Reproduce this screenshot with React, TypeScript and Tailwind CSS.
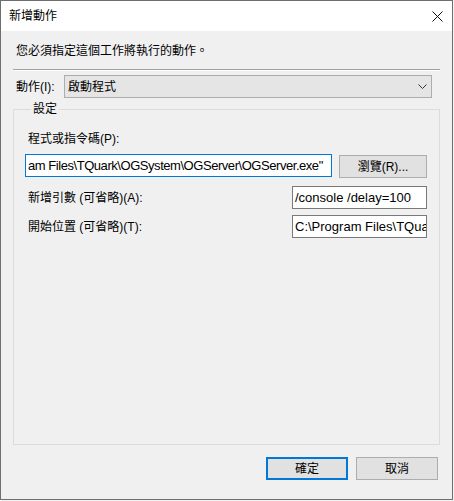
import React from 'react';

const font = "font-['Liberation_Sans','Noto_Sans_CJK_TC',sans-serif]";

// Plain Win32-style push button
const PushButton = ({ label, primary = false }: { label: string; primary?: boolean }) => (
  <div
    className={`w-[82px] h-[23px] flex items-center justify-center bg-[#e1e1e1] ${
      primary ? 'border-2 border-[#0078d7]' : 'border border-[#adadad]'
    }`}
  >
    {label}
  </div>
);

// Single line edit box
const EditBox = ({
  value,
  focused = false,
  className = '',
  textClass = '',
}: {
  value: string;
  focused?: boolean;
  className?: string;
  textClass?: string;
}) => (
  <div
    className={`h-[23px] flex items-center bg-white px-[2px] overflow-hidden whitespace-nowrap border ${
      focused ? 'border-[#0078d7]' : 'border-[#7a7a7a]'
    } ${className}`}
  >
    <span className={`text-[13px] leading-none ${textClass}`}>{value}</span>
  </div>
);

export default function App() {
  return (
    <div className={`w-[454px] h-[501px] bg-[#f4f4f4] text-[12px] leading-[16px] text-black ${font}`}>
      <div className="w-[453px] h-[500px] border border-[#6e6e6e] bg-[#f0f0f0] flex flex-col">
        {/* Title bar */}
        <div className="h-[30px] bg-white flex items-center justify-between pl-[8px] pr-[8px] shrink-0">
          <span className="text-[12px]">新增動作</span>
          <svg width="11" height="11" viewBox="0 0 11 11" className="mr-[1px]">
            <path d="M0.5 0.5 L10.5 10.5 M10.5 0.5 L0.5 10.5" stroke="#111" strokeWidth="1" fill="none" />
          </svg>
        </div>

        <div className="flex-1 flex flex-col px-[12px] pb-[19px]">
          <p className="mt-[12px] pl-[3px]">您必須指定這個工作將執行的動作。</p>

          {/* Etched separator */}
          <div className="mt-[10px] border-t border-[#a0a0a0] border-b border-b-white" />

          {/* Action combobox */}
          <div className="mt-[4px] flex items-center h-[23px]">
            <span className="w-[51px] pl-[3px] shrink-0">動作(I):</span>
            <div className="flex-1 mr-[8px] h-[23px] flex items-center justify-between bg-[#e5e5e5] border border-[#adadad] pl-[3px] pr-[4px]">
              <span>啟動程式</span>
              <svg width="9" height="5" viewBox="0 0 9 5">
                <path d="M0.5 0.5 L4.5 4.5 L8.5 0.5" stroke="#333" strokeWidth="1" fill="none" />
              </svg>
            </div>
          </div>

          {/* Settings group */}
          <fieldset className="mt-[3px] flex-1 border border-[#dcdcdc] px-[11px] pr-[12px]">
            <legend className="ml-[6px] px-[2px]">設定</legend>

            <p className="mt-[14px] pl-[3px]">程式或指令碼(P):</p>
            <div className="mt-[7px] flex items-start">
              <EditBox
                value={'am Files\\TQuark\\OGSystem\\OGServer\\OGServer.exe"'}
                focused
                className="w-[307px]"
                textClass="tracking-[-0.45px]"
              />
              <div className="ml-auto mt-[1px] w-[88px] h-[23px] flex items-center justify-center bg-[#e1e1e1] border border-[#adadad]">
                瀏覽(R)...
              </div>
            </div>

            <div className="mt-[8px] flex items-center">
              <span className="pl-[3px]">新增引數 (可省略)(A):</span>
              <EditBox value="/console /delay=100" className="ml-auto w-[135px]" />
            </div>

            <div className="mt-[6px] flex items-center">
              <span className="pl-[3px]">開始位置 (可省略)(T):</span>
              <EditBox value={'C:\\Program Files\\TQua'} className="ml-auto w-[135px]" />
            </div>
          </fieldset>

          {/* Dialog buttons */}
          <div className="mt-[12px] flex justify-end gap-[8px] pr-[2px]">
            <PushButton label="確定" primary />
            <PushButton label="取消" />
          </div>
        </div>
      </div>
    </div>
  );
}
